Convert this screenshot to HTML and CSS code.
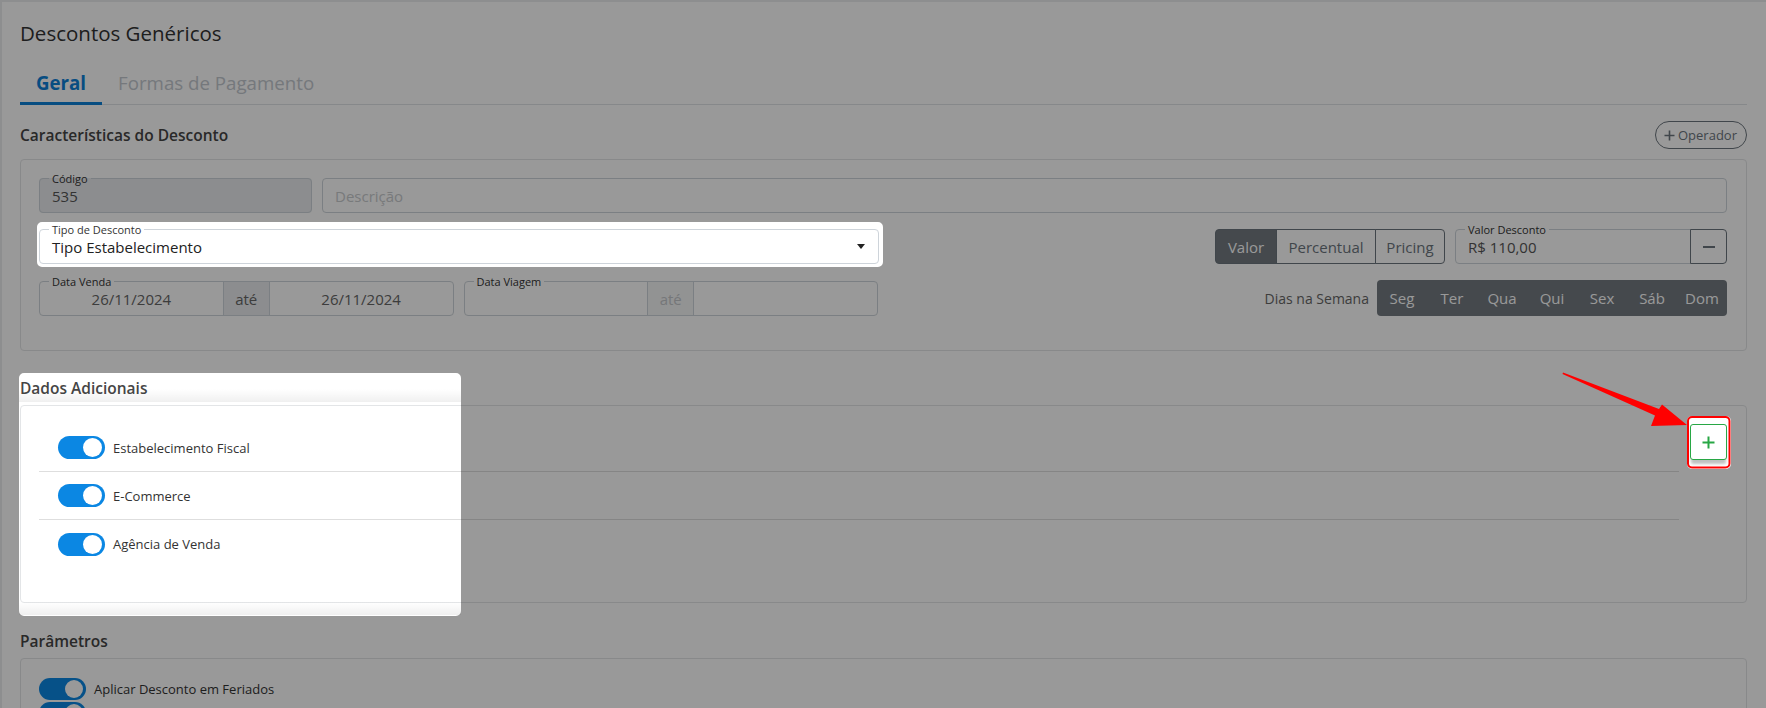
FILE: index.html
```html
<!DOCTYPE html>
<html lang="pt-BR">
<head>
  <meta charset="UTF-8">
  <meta name="viewport" content="width=device-width, initial-scale=1.0">
  <title>Descontos Genéricos</title>
  <link rel="stylesheet" href="styles.css">
</head>
<body>
  <div class="page">
    <h1 class="page-title">Descontos Genéricos</h1>

    <nav class="tabs">
      <a class="tab active">Geral</a>
      <a class="tab">Formas de Pagamento</a>
    </nav>

    <!-- Características -->
    <section class="section section-main">
      <div class="section-head">
        <h2>Características do Desconto</h2>
        <button class="btn-pill">
          <svg width="11" height="11" viewBox="0 0 11 11"><path d="M5.5 0.5V10.5M0.5 5.5H10.5" stroke="currentColor" stroke-width="1.6"/></svg>
          Operador
        </button>
      </div>

      <div class="panel panel-main">
        <div class="form-row row-top">
          <fieldset class="field disabled">
            <legend>Código</legend>
            <div class="field-body">535</div>
          </fieldset>
          <fieldset class="field">
            <div class="field-body placeholder">Descrição</div>
          </fieldset>
        </div>

        <div class="form-row">
          <fieldset class="field field-select">
            <legend>Tipo de Desconto</legend>
            <div class="field-body">
              <span class="value-dark">Tipo Estabelecimento</span>
              <svg class="caret" width="8" height="5" viewBox="0 0 8 5"><path d="M0 0H8L4 5Z" fill="#222"/></svg>
            </div>
          </fieldset>

          <div class="row-right">
            <div class="btn-group">
              <button class="btn btn-valor active">Valor</button>
              <button class="btn btn-perc">Percentual</button>
              <button class="btn btn-pricing">Pricing</button>
            </div>
            <div class="value-group">
              <fieldset class="field field-value">
                <legend>Valor Desconto</legend>
                <div class="field-body">R$ 110,00</div>
              </fieldset>
              <button class="btn-minus">
                <svg width="12" height="2" viewBox="0 0 12 2"><rect width="12" height="2" fill="currentColor"/></svg>
              </button>
            </div>
          </div>
        </div>

        <div class="form-row row-dates">
          <fieldset class="field field-range">
            <legend>Data Venda</legend>
            <div class="field-body range">
              <span class="range-value">26/11/2024</span>
              <span class="addon">até</span>
              <span class="range-value">26/11/2024</span>
            </div>
          </fieldset>
          <fieldset class="field field-range off">
            <legend>Data Viagem</legend>
            <div class="field-body range">
              <span class="range-value"></span>
              <span class="addon">até</span>
              <span class="range-value"></span>
            </div>
          </fieldset>

          <div class="row-right">
            <span class="days-label">Dias na Semana</span>
            <div class="days">
              <span>Seg</span><span>Ter</span><span>Qua</span><span>Qui</span><span>Sex</span><span>Sáb</span><span>Dom</span>
            </div>
          </div>
        </div>
      </div>
    </section>

    <!-- Dados Adicionais -->
    <section class="section section-extra">
      <div class="section-head">
        <h2>Dados Adicionais</h2>
      </div>
      <div class="panel panel-extra">
        <ul class="switch-list">
          <li><span class="switch"></span>Estabelecimento Fiscal</li>
          <li><span class="switch"></span>E-Commerce</li>
          <li><span class="switch"></span>Agência de Venda</li>
        </ul>
        <button class="btn-add">
          <svg width="13" height="13" viewBox="0 0 13 13"><path d="M6.5 0.5V12.5M0.5 6.5H12.5" stroke="#28a745" stroke-width="2"/></svg>
        </button>
      </div>
    </section>

    <!-- Parâmetros -->
    <section class="section section-params">
      <div class="section-head">
        <h2>Parâmetros</h2>
      </div>
      <div class="panel panel-params">
        <div class="switch-row"><span class="switch small"></span>Aplicar Desconto em Feriados</div>
        <div class="switch-row"><span class="switch small"></span>Acumulativo</div>
      </div>
    </section>
  </div>

  <!-- tour overlay with highlighted holes -->
  <svg class="tour-overlay" width="1766" height="708" viewBox="0 0 1766 708">
    <defs>
      <linearGradient id="fade" x1="0" y1="0" x2="0" y2="1">
        <stop offset="0" stop-color="#000" stop-opacity="0"/>
        <stop offset="1" stop-color="#000" stop-opacity="0.06"/>
      </linearGradient>
    </defs>
    <path fill="rgba(0,0,0,0.4)" fill-rule="evenodd"
      d="M0 0H1766V708H0Z
         M42 222H878A5 5 0 0 1 883 227V262A5 5 0 0 1 878 267H42A5 5 0 0 1 37 262V227A5 5 0 0 1 42 222Z
         M24 373H456A5 5 0 0 1 461 378V611A5 5 0 0 1 456 616H24A5 5 0 0 1 19 611V378A5 5 0 0 1 24 373Z
         M1692 416H1726A5 5 0 0 1 1731 421V464A5 5 0 0 1 1726 469H1692A5 5 0 0 1 1687 464V421A5 5 0 0 1 1692 416Z"/>
    <rect x="19" y="389" width="442" height="13" fill="url(#fade)"/>
    <rect x="19" y="602" width="442" height="13" fill="url(#fade)"/>
    <rect x="1688" y="417" width="41.5" height="50.5" rx="4" fill="none" stroke="#ff0000" stroke-width="2"/>
    <polygon fill="#ff0000" points="1563,372.5 1659,409 1662,404.5 1687,425 1651,426 1655,415.5 1562.5,374"/>
  </svg>
</body>
</html>
```

FILE: styles.css
```css
/* Reset */
* {
  margin: 0;
  padding: 0;
  box-sizing: border-box;
}

html, body {
  height: 100%;
  overflow: hidden;
}

body {
  position: relative;
  font-family: 'Open Sans', 'Noto Sans', Arial, sans-serif;
  background: #ebedef;
  color: #333;
}

button {
  font-family: inherit;
  cursor: pointer;
}

.page {
  min-height: 100%;
  margin: 2px 0 0 2px;
  padding: 17px 19px 0 18px;
  background: #fff;
}

.page-title {
  font-size: 20.5px;
  line-height: 28px;
  font-weight: 400;
  color: #333;
  margin-bottom: 15px;
}

/* Tabs */
.tabs {
  display: flex;
  border-bottom: 1px solid #dfe3e7;
}

.tab {
  font-size: 18.7px;
  line-height: 24px;
  padding: 9px 16px 7px;
  border-bottom: 3px solid transparent;
  margin-bottom: -1px;
  color: #c3c9cf;
  text-decoration: none;
}

.tab.active {
  color: #0d80d8;
  font-weight: 700;
  border-bottom-color: #0d80d8;
}

/* Sections */
.section-main {
  margin-top: 16px;
}

.section-extra {
  margin-top: 26px;
}

.section-params {
  margin-top: 27px;
}

.section-head {
  display: flex;
  justify-content: space-between;
  align-items: center;
  margin-bottom: 6px;
}

.section-main .section-head {
  margin-bottom: 10px;
}

.section-head h2 {
  font-size: 15.5px;
  line-height: 22px;
  font-weight: 600;
  color: #454545;
}

.btn-pill {
  display: inline-flex;
  align-items: center;
  gap: 3px;
  height: 28px;
  padding: 0 9px 0 8px;
  border: 1px solid #6c757d;
  border-radius: 14px;
  background: #fff;
  color: #6c757d;
  font-size: 13px;
}

.panel {
  border: 1px solid #e3e5e7;
  border-radius: 4px;
  background: #fff;
}

/* Main form panel */
.panel-main {
  display: flex;
  flex-direction: column;
  gap: 9px;
  padding: 11px 19px 34px 18px;
}

.form-row {
  display: flex;
  align-items: flex-end;
  gap: 10px;
}

.row-dates {
  margin-top: 1px;
}

.row-top {
  display: grid;
  grid-template-columns: 273px 1fr;
}

.row-right {
  display: flex;
  align-items: flex-end;
  gap: 10px;
  margin-left: auto;
}

.field {
  min-width: 0;
  border: 1px solid #ced4da;
  border-radius: 4px;
  padding: 0;
  background: #fff;
}

.field legend {
  margin-left: 9px;
  padding: 0 3px;
  font-size: 11px;
  line-height: 15px;
  color: #333;
}

.field-body {
  display: flex;
  align-items: center;
  height: 33px;
  padding: 0 12px;
  font-size: 15px;
  color: #555;
  white-space: nowrap;
}

.field legend + .field-body {
  margin-top: -7px;
}

.field.disabled {
  background: #e9ecef;
}

.placeholder {
  color: #c8cbce;
}

.field-select {
  width: 840px;
}

.field-select .field-body {
  padding-right: 13px;
}

.value-dark {
  color: #222;
}

.caret {
  margin-left: auto;
}

/* date ranges */
.field-range {
  width: 414.5px;
}

.field-body.range {
  padding: 0;
}

.range-value {
  flex: 1;
  text-align: center;
  color: #666;
}

.addon {
  align-self: stretch;
  display: flex;
  align-items: center;
  justify-content: center;
  width: 47px;
  border-left: 1px solid #ced4da;
  border-right: 1px solid #ced4da;
  background: #e9ecef;
  color: #666;
}

.field-range.off .addon {
  background: #f4f5f6;
  color: #c4c7ca;
}

/* value type buttons */
.btn-group {
  display: flex;
  height: 35px;
}

.btn {
  padding: 0;
  border: 1px solid #6c757d;
  background: #fff;
  color: #6c757d;
  font-size: 15px;
}

.btn-valor {
  width: 62px;
}

.btn-perc {
  width: 100px;
}

.btn-pricing {
  width: 70px;
}

.btn + .btn {
  margin-left: -1px;
}

.btn:first-child {
  border-radius: 4px 0 0 4px;
}

.btn:last-child {
  border-radius: 0 4px 4px 0;
}

.btn.active {
  background: #737a81;
  color: #fff;
}

.value-group {
  display: flex;
  align-items: flex-end;
}

.field-value {
  width: 236px;
  border-radius: 4px 0 0 4px;
}

.btn-minus {
  width: 37px;
  height: 35px;
  margin-left: -1px;
  display: flex;
  align-items: center;
  justify-content: center;
  border: 1px solid #6c757d;
  border-radius: 0 4px 4px 0;
  background: #fff;
  color: #6c757d;
}

.days-label {
  font-size: 14px;
  color: #666;
  line-height: 35px;
  margin-right: -2px;
}

.days {
  display: flex;
  width: 350px;
  height: 36px;
  border-radius: 4px;
  background: #737a81;
}

.days span {
  flex: 1;
  display: flex;
  align-items: center;
  justify-content: center;
  color: #fff;
  font-size: 15px;
}

/* Dados adicionais */
.panel-extra {
  display: flex;
  align-items: flex-start;
  gap: 11px;
  padding: 18px 19px 34px 18px;
}

.switch-list {
  flex: 1;
  list-style: none;
}

.switch-list li {
  display: flex;
  align-items: center;
  gap: 8px;
  height: 48px;
  padding-left: 19px;
  border-bottom: 1px solid #dedede;
  font-size: 13px;
  color: #333;
}

.switch-list li:last-child {
  border-bottom: none;
}

.switch {
  position: relative;
  flex: none;
  width: 47px;
  height: 23px;
  border-radius: 12px;
  background: #0b87e3;
}

.switch::after {
  content: '';
  position: absolute;
  top: 2px;
  right: 3px;
  width: 19px;
  height: 19px;
  border-radius: 50%;
  background: #fff;
}

.switch.small {
  height: 22px;
  border-radius: 11px;
}

.switch.small::after {
  top: 2px;
  width: 18px;
  height: 18px;
}

.btn-add {
  flex: none;
  width: 37px;
  height: 36px;
  display: flex;
  align-items: center;
  justify-content: center;
  border: 1px solid #28a745;
  border-radius: 3px;
  background: #fff;
  box-shadow: 0 5px 3px -1px rgba(0, 0, 0, 0.25);
}

/* Parâmetros */
.panel-params {
  padding: 18px 18px;
}

.switch-row {
  display: flex;
  align-items: center;
  gap: 8px;
  height: 24px;
  font-size: 13px;
  color: #333;
}

/* Tour overlay */
.tour-overlay {
  position: absolute;
  top: 0;
  left: 0;
  pointer-events: none;
}
```
